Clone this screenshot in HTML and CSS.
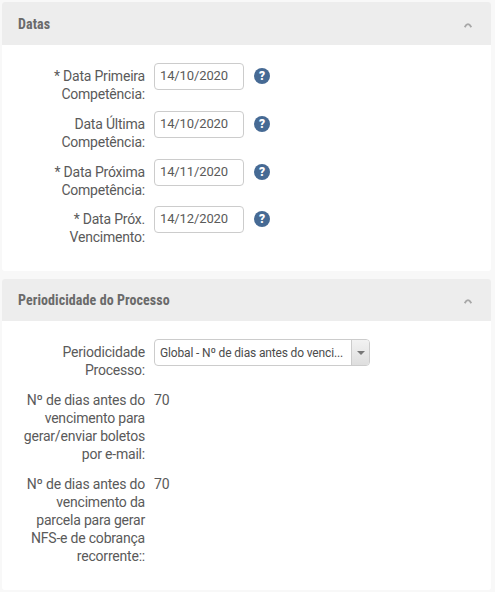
FILE: index.html
```
<!DOCTYPE html>
<html lang="pt-br">
<head>
	<meta charset="utf-8">
	<title>Datas</title>
	<link rel="stylesheet" href="styles.css">
</head>
<body>
	<div class="panel datas">
		<div class="panel-head">
			<h2>Datas</h2>
			<svg class="seta" width="8" height="5" viewBox="0 0 8 5"><path d="M0.7 4.2Q4 -1.8 7.3 4.2" /></svg>
		</div>
		<div class="panel-body">
			<div class="linha">
				<label>* Data Primeira Competência:</label>
				<input class="data" type="text" value="14/10/2020">
				<span class="ajuda">?</span>
			</div>
			<div class="linha">
				<label>Data Última Competência:</label>
				<input class="data" type="text" value="14/10/2020">
				<span class="ajuda">?</span>
			</div>
			<div class="linha">
				<label>* Data Próxima Competência:</label>
				<input class="data" type="text" value="14/11/2020">
				<span class="ajuda">?</span>
			</div>
			<div class="linha">
				<label>* Data Próx. Vencimento:</label>
				<input class="data" type="text" value="14/12/2020">
				<span class="ajuda">?</span>
			</div>
		</div>
	</div>
	<div class="panel periodo">
		<div class="panel-head">
			<h2>Periodicidade do Processo</h2>
			<svg class="seta" width="8" height="5" viewBox="0 0 8 5"><path d="M0.7 4.2Q4 -1.8 7.3 4.2" /></svg>
		</div>
		<div class="panel-body">
			<div class="linha">
				<label>Periodicidade Processo:</label>
				<div class="combo">
					<span class="combo-texto">Global - Nº de dias antes do venci...</span>
					<span class="combo-botao"></span>
				</div>
			</div>
			<div class="linha">
				<label>Nº de dias antes do vencimento para gerar/enviar boletos por e-mail:</label>
				<span class="valor">70</span>
			</div>
			<div class="linha">
				<label>Nº de dias antes do vencimento da parcela para gerar NFS-e de cobrança recorrente::</label>
				<span class="valor">70</span>
			</div>
		</div>
	</div>
</body>
</html>
```
FILE: styles.css
```
*{margin:0;padding:0;box-sizing:border-box;}
body{
	padding: 2px 4px 0 2px;
	background-color: #f8f8f8;
	font-family: Roboto,"Liberation Sans",sans-serif;
	font-size: 14px;
	line-height: 18px;
	letter-spacing: -0.21px;
	color: #5a5a5a;
}
.panel{
	background-color: #fff;
	border-radius: 3px;
	overflow: hidden;
}
.datas{
	height: 269px;
	margin-bottom: 8px;
}
.periodo{
	height: 311px;
}
.panel-head{
	display: flex;
	align-items: center;
	justify-content: space-between;
	height: 43px;
	padding: 0 19px 0 16px;
	background-color: #ededed;
}
.periodo .panel-head{
	height: 42px;
}
.panel-head h2{
	font-family: "Roboto Condensed",Roboto,sans-serif;
	font-size: 14px;
	font-weight: bold;
	font-stretch: 75%;
	letter-spacing: 0.08px;
	color: #6a6a6a;
}
.seta{
	margin-top: 3px;
	fill: none;
	stroke: #a8a8a8;
	stroke-width: 1.8;
}
.panel-body{
	padding: 18px 0 0 16px;
}
.linha{
	display: flex;
	align-items: flex-start;
	margin-bottom: 11.8px;
}
.linha label{
	width: 127px;
	margin-right: 9px;
	padding-top: 4px;
	margin-bottom: -4px;
	text-align: right;
}
.data{
	width: 90px;
	height: 27px;
	padding: 0 5px 2px;
	border: 1px solid #ccc;
	border-radius: 4px;
	background-color: #fff;
	font-family: inherit;
	font-size: 13px;
	letter-spacing: -0.12px;
	color: #5a5a5a;
}
.ajuda{
	width: 16px;
	height: 16px;
	margin: 5px 0 0 10px;
	border-radius: 50%;
	background-color: #466a94;
	color: #fff;
	font-size: 12px;
	font-weight: 900;
	line-height: 16px;
	text-align: center;
}
.combo{
	display: flex;
	width: 216px;
	height: 27px;
	border: 1px solid #ccc;
	border-radius: 4px;
	overflow: hidden;
}
.combo-texto{
	flex: 1;
	padding-left: 5px;
	font-size: 12px;
	line-height: 26px;
	letter-spacing: -0.15px;
	color: #4c4c4c;
	white-space: nowrap;
}
.combo-botao{
	display: flex;
	align-items: center;
	justify-content: center;
	width: 18px;
	border-left: 1px solid #ccc;
	background: linear-gradient(#f2f2f2,#dedede);
}
.combo-botao:after{
	content: "";
	border: 4px solid transparent;
	border-top-color: #777;
	border-bottom: 0;
}
.valor{
	padding-top: 4px;
}
```
